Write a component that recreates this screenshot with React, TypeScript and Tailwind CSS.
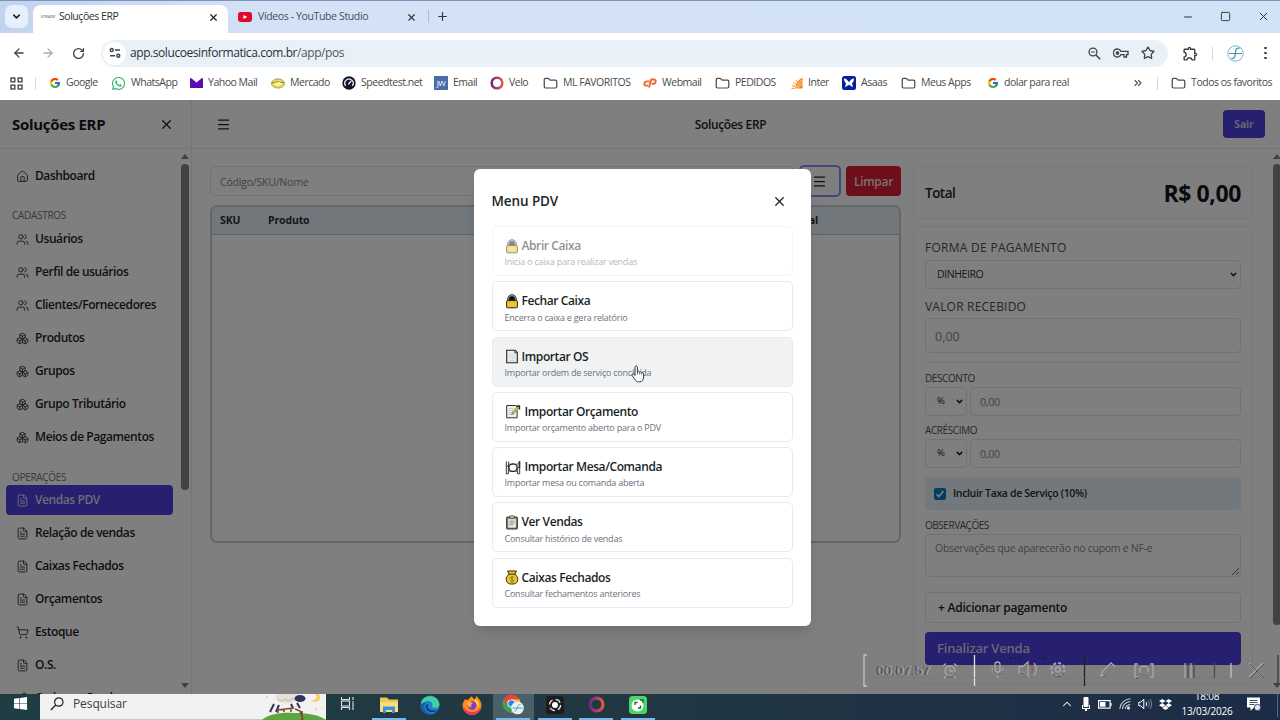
import React from "react";
import {
  ArrowLeft,
  ArrowRight,
  Boxes,
  ChevronDown,
  ChevronsRight,
  ChevronUp,
  FileText,
  Folder,
  House,
  Menu,
  Minus,
  Plus,
  RotateCw,
  ShoppingCart,
  Square,
  Star,
  Users,
  Wrench,
  X,
} from "lucide-react";
import { FcGoogle } from "react-icons/fc";
import { FaDropbox, FaWhatsapp, FaWindows } from "react-icons/fa";
import { MdOutlineExtension } from "react-icons/md";

interface NavItem {
  label: string;
  icon: React.ElementType;
  active?: boolean;
}

interface MenuOption {
  title: string;
  description: string;
  icon: React.ReactNode;
  state?: "disabled" | "hover";
}

interface Bookmark {
  label: string;
  icon: React.ReactNode;
  className: string;
}

const cadastros: NavItem[] = [
  { label: "Usuários", icon: Users },
  { label: "Perfil de usuários", icon: Users },
  { label: "Clientes/Fornecedores", icon: Users },
  { label: "Produtos", icon: Boxes },
  { label: "Grupos", icon: Boxes },
  { label: "Grupo Tributário", icon: Boxes },
  { label: "Meios de Pagamentos", icon: Boxes },
];

const operacoes: NavItem[] = [
  { label: "Vendas PDV", icon: FileText, active: true },
  { label: "Relação de vendas", icon: FileText },
  { label: "Caixas Fechados", icon: FileText },
  { label: "Orçamentos", icon: FileText },
  { label: "Estoque", icon: ShoppingCart },
  { label: "O.S.", icon: FileText },
  { label: "Ordens e Prod.", icon: Wrench },
];

/* ---------- Icons ---------- */

const LockIcon = () => (
  <svg width="14" height="15" viewBox="0 0 14 15">
    <path d="M2.6 7V5a4.400 4.400 0 0 1 8.800 0v2" fill="#8a8a8a" stroke="#555" strokeWidth="1" />
    <path d="M4.200 7V5.200a2.800 2.800 0 0 1 5.600 0V7" fill="#111" stroke="#111" strokeWidth=".6" />
    <rect x="1.600" y="6.600" width="10.800" height="7.200" rx=".8" fill="#f2c230" stroke="#2a2410" strokeWidth="1" />
  </svg>
);

const PageIcon = () => (
  <svg width="14" height="15" viewBox="0 0 14 15">
    <path d="M1.700 1.200h8.400l2.200 2.200v10.400H1.700z" fill="#eceeef" stroke="#222" strokeWidth="1.100" />
    <path d="M9.800 1.400v2.300h2.300" fill="none" stroke="#222" strokeWidth=".8" />
    <path d="M3.500 5.500h7M3.500 7.500h7M3.500 9.500h7M3.500 11.500h7" stroke="#cfd2d4" strokeWidth=".7" />
  </svg>
);

const MemoIcon = () => (
  <svg width="17" height="15" viewBox="0 0 17 15">
    <path d="M1.700 1.500h8.800l1.600 1.600v10.700H1.700z" fill="#f1f1ee" stroke="#333" strokeWidth="1" />
    <path d="M3.500 4.500h6M3.500 6.500h5M3.500 8.500h4M3.500 10.500h6" stroke="#b9bbb8" strokeWidth=".7" />
    <path d="m6.500 10.500 1-2.600 5-5.200 1.600 1.500-5 5.200z" fill="#b5cb4a" stroke="#596329" strokeWidth=".5" />
    <path d="M11.500 2h3v3.400" fill="none" stroke="#222" strokeWidth="1.300" />
  </svg>
);

const PlateIcon = () => (
  <svg width="17" height="15" viewBox="0 0 17 15" fill="none" stroke="#222">
    <circle cx="8" cy="7.700" r="4" strokeWidth="1" />
    <path d="M4 4.200h8M4 11.200h8" strokeWidth=".8" />
    <path d="M1.300 1.500v4.600h2.300V1.500M1.300 6v7.800h2.100V6" strokeWidth=".9" />
    <path d="M14.700 1.300c-1.800.8-2 4-1.600 6.200h1.600V1.300v12.500h-2.100V7.500" strokeWidth=".9" />
  </svg>
);

const ClipboardIcon = () => (
  <svg width="14" height="15" viewBox="0 0 14 15">
    <rect x="1.600" y="2" width="10.800" height="12" rx=".8" fill="#8c7c62" stroke="#222" strokeWidth=".9" />
    <rect x="3.200" y="3.600" width="7.600" height="9" fill="#e9e9e6" />
    <rect x="4.600" y=".9" width="4.800" height="2.800" rx=".6" fill="#bbb" stroke="#333" strokeWidth=".7" />
    <path d="M4.500 6.200h5M4.500 8h5M4.500 9.800h3.500" stroke="#777" strokeWidth=".8" />
  </svg>
);

const MoneyBagIcon = () => (
  <svg width="14" height="15" viewBox="0 0 14 15">
    <path d="M2.600 1h8.800L9.800 4.200C11.800 5.400 12.800 7.600 12.800 9.600c0 2.800-2.200 4.500-5.800 4.500s-5.800-1.700-5.800-4.500c0-2 1-4.200 3-5.400z" fill="#f0c22a" stroke="#3a2f0c" strokeWidth="1" />
    <path d="M3.800 4.200h6.400" stroke="#6b4c12" strokeWidth="1.300" />
    <path d="M8.600 7.400C7 6.600 5.600 7 5.600 8.200s3 1 3 2.400-1.800 1.600-3.200.7M7 6.300v6" fill="none" stroke="#4c8a35" strokeWidth=".9" />
  </svg>
);

const HandCursor = () => (
  <svg width="14" height="18" viewBox="0 0 14 18">
    <path
      d="M4 10.500V2.300C4 .5 6.400.5 6.400 2.300v4.600c.4-.9 2-.8 2.200.3.500-.7 1.900-.5 2 .6.700-.5 2-.1 2 1.200v3.200c0 2.600-1.300 4.600-4 4.600H7.400c-1.500 0-2.500-.7-3.300-2L1.200 10.500c-.7-1.300.8-2.200 1.700-1.100z"
      fill="#fff"
      stroke="#333"
      strokeWidth="1"
    />
    <path d="M6.400 7v2.500M8.600 7.500v2M10.600 8v1.500" stroke="#333" strokeWidth=".7" />
  </svg>
);

const YoutubeIcon = () => (
  <svg width="14" height="10" viewBox="0 0 14 10">
    <rect width="14" height="10" rx="2.400" fill="#e3062f" />
    <path d="m5.500 2.900 3.800 2.100-3.800 2.100z" fill="#fff" />
  </svg>
);

const TuneIcon = () => (
  <svg width="12" height="12" viewBox="0 0 12 12" fill="none" stroke="#3f4347" strokeWidth="1.400">
    <circle cx="2.700" cy="3" r="1.500" />
    <path d="M6 3h5M1 8.800h5" />
    <circle cx="9.300" cy="8.800" r="1.500" />
  </svg>
);

const AppsGridIcon = () => (
  <svg width="13" height="13" viewBox="0 0 13 13" fill="none" stroke="#45494d" strokeWidth="1.400">
    <rect x="1" y="1" width="3.800" height="3.800" />
    <rect x="8.200" y="1" width="3.800" height="3.800" />
    <rect x="1" y="8.200" width="3.800" height="3.800" />
    <rect x="8.200" y="8.200" width="3.800" height="3.800" />
  </svg>
);

const YahooIcon = () => (
  <svg width="13" height="10" viewBox="0 0 13 10">
    <rect width="13" height="10" rx=".8" fill="#5b0cb5" />
    <path d="m1 0 5.500 4.600L12 0z" fill="#fff" />
  </svg>
);

const MercadoIcon = () => (
  <svg width="14" height="11" viewBox="0 0 14 11">
    <ellipse cx="7" cy="5.500" rx="6.500" ry="4.600" fill="#f1dc4c" stroke="#8d8748" strokeWidth=".8" />
    <path d="M1 4.500c2 .8 3 .2 4.500-.6 1.800-.8 4.500 1.200 7.400.6" fill="none" stroke="#77754c" strokeWidth=".9" />
    <path d="M3 5.500c1.500 2.800 6.500 2.800 8 0L8 4z" fill="#f6f3d9" />
  </svg>
);

const SpeedtestIcon = () => (
  <svg width="14" height="14" viewBox="0 0 14 14">
    <circle cx="7" cy="7" r="6.700" fill="#15152a" />
    <path d="M3.700 9.800a4.200 4.200 0 1 1 6.600 0" fill="none" stroke="#fff" strokeWidth="1.200" />
    <path d="m6.400 8.400 2.800-3.600" stroke="#fff" strokeWidth="1.300" />
  </svg>
);

const VeloIcon: React.FC<{ size?: number }> = ({ size = 14 }) => (
  <svg width={size} height={size} viewBox="0 0 14 14">
    <defs>
      <linearGradient id="velo">
        <stop offset="0" stopColor="#6d2a7c" />
        <stop offset="1" stopColor="#e2574c" />
      </linearGradient>
    </defs>
    <circle cx="7" cy="7" r="5.300" fill="none" stroke="url(#velo)" strokeWidth="2.600" />
  </svg>
);

const CpanelIcon = () => (
  <svg width="14" height="10" viewBox="0 0 14 10" fill="none" stroke="#e8672c" strokeWidth="1.900">
    <path d="M6.600 3.400H3.800C1.200 3.400.4 7.600 3 7.600h2.200" />
    <path d="M6 9.600 8.200 1.500H11c2.800 0 2 4.300-.6 4.300H8.600" />
  </svg>
);

const InterIcon = () => (
  <svg width="12" height="12" viewBox="0 0 12 12">
    <path d="M11.500.5v11H4.200c.3-4.600 3-8.800 7.300-11z" fill="#f08a1c" />
    <path d="M.5 11.300h3M1.200 8.400l3 1.200M2.600 5.600l2.700 1.900M5 3.200l1.800 2.400" stroke="#f3a650" strokeWidth="1.200" />
    <path d="m4.500 11.500 6-8.500M6.500 11.500l5-6" stroke="#fff" strokeWidth=".6" />
  </svg>
);

const AsaasIcon = () => (
  <svg width="14" height="14" viewBox="0 0 14 14">
    <rect width="14" height="14" rx="2.500" fill="#0b1f9c" />
    <path d="M2 2.500c2 .2 3.600 1.500 5 3.800 1.400-2.300 3-3.600 5-3.800-.2 2.500-.8 4-2 4.800L11 11.300 7 8.800l-4 2.500 1-4C2.800 6.500 2.200 5 2 2.500z" fill="#fff" />
  </svg>
);

const FolderIcon = () => <Folder size={15} strokeWidth={2} color="#474b4f" className="scale-y-90" />;

const ZoomOutIcon = () => (
  <svg width="13" height="13" viewBox="0 0 13 13" fill="none" stroke="#3f4347">
    <circle cx="5" cy="5" r="3.900" strokeWidth="1.300" />
    <path d="m8 8 4.200 4.200" strokeWidth="1.500" />
    <path d="M3.200 5h3.600" strokeWidth="1" />
  </svg>
);

const KeyIcon = () => (
  <svg width="16" height="10" viewBox="0 0 16 10" fill="none" stroke="#3f4347" strokeWidth="1.300">
    <path d="M8 3.400A4 4 0 1 0 8 6.600h3V9h2.500V6.600H15V3.400z" />
    <circle cx="4.500" cy="5" r="1.200" fill="#3f4347" />
  </svg>
);

const ProfileIcon = () => (
  <svg width="17" height="17" viewBox="0 0 17 17" fill="none">
    <circle cx="8.500" cy="8.500" r="7.700" stroke="#63bccd" strokeWidth="1" />
    <path d="M12.600 3.300c-3-.6-4 1-4.200 4.700s-1.200 6-4 5.600" stroke="#3a9db5" strokeWidth="1.300" />
    <path d="M2 8.500h13" stroke="#66757d" strokeWidth=".9" />
  </svg>
);

/* ---------- Browser ---------- */

const TabStrip = () => (
  <div className="flex h-[33px] shrink-0 items-end border-t border-[#7f93b8] bg-linear-to-r from-[#c3d2ef] via-[#d3e2f6] via-20% to-[#d3e3f7]">
    <div className="mb-[5px] ml-[5px] flex h-[23px] w-[23px] items-center justify-center rounded-[7px] bg-[#e6f0fa]">
      <ChevronDown size={11} strokeWidth={3.600} color="#222" />
    </div>
    <div className="ml-[5px] flex h-[28px] w-[195px] items-center rounded-t-[8px] bg-white pb-[4px] pl-[8px]">
      <span className="w-[12px] text-center text-[4px] font-bold italic leading-none text-[#8f949c]">ETRADE</span>
      <span className="ml-[6px] text-[10.500px] tracking-[-0.450px] text-[#2c2f33]">Soluções ERP</span>
      <X size={11} strokeWidth={2.800} color="#222" className="ml-auto mr-[9px]" />
    </div>
    <div className="flex h-[28px] w-[200px] items-center pb-[4px] pl-[10px]">
      <YoutubeIcon />
      <span className="ml-[6px] text-[10.500px] tracking-[-0.370px] text-[#46505c]">Vídeos - YouTube Studio</span>
      <X size={11} strokeWidth={2.400} color="#333" className="ml-auto mr-[11px]" />
    </div>
    <div className="mb-[10px] h-[13px] w-px bg-[#a9bce0]" />
    <Plus size={13} strokeWidth={2.200} color="#333" className="mb-[10px] ml-[7px]" />
    <div className="mb-[10px] ml-auto flex items-center gap-[26px] pr-[10px] text-[#2b2f38]">
      <Minus size={12} strokeWidth={2} />
      <Square size={11} strokeWidth={2} />
      <X size={13} strokeWidth={1.800} />
    </div>
  </div>
);

const AddressBar = () => (
  <div className="flex h-[36px] shrink-0 items-center bg-white pt-[4px]">
    <ArrowLeft size={14} strokeWidth={2.200} color="#3f4347" className="ml-[12px]" />
    <ArrowRight size={14} strokeWidth={2.200} color="#a9acb0" className="ml-[15px]" />
    <RotateCw size={13} strokeWidth={2.400} color="#3f4347" className="ml-[17px]" />
    <div className="ml-[16px] flex h-[27px] w-[1067px] items-center rounded-full bg-[#e9f1f8] pl-[2px] pr-[13px]">
      <div className="flex h-[23px] w-[23px] items-center justify-center rounded-full bg-white">
        <TuneIcon />
      </div>
      <span className="ml-[4px] text-[12px] tracking-[-0.430px] text-[#2b2f33]">
        app.solucoesinformatica.com.br<span className="text-[#50575e]">/app/pos</span>
      </span>
      <div className="ml-auto flex items-center gap-[12px]">
        <ZoomOutIcon />
        <KeyIcon />
        <Star size={14} strokeWidth={2.200} color="#3f4347" />
      </div>
    </div>
    <MdOutlineExtension size={17} color="#3f4347" className="ml-[14px]" />
    <div className="ml-[13px] h-[13px] w-px bg-[#c8dcf0]" />
    <div className="ml-[14px]">
      <ProfileIcon />
    </div>
    <div className="ml-[20px] flex flex-col gap-[2.500px]">
      <i className="h-[2.500px] w-[2.500px] rounded-full bg-[#3f4347]" />
      <i className="h-[2.500px] w-[2.500px] rounded-full bg-[#3f4347]" />
      <i className="h-[2.500px] w-[2.500px] rounded-full bg-[#3f4347]" />
    </div>
  </div>
);

const bookmarks: Bookmark[] = [
  { label: "Google", icon: <FcGoogle size={12} />, className: "w-[62px]" },
  { label: "WhatsApp", icon: <FaWhatsapp size={15} color="#35b46a" />, className: "w-[79px]" },
  { label: "Yahoo Mail", icon: <YahooIcon />, className: "w-[81px]" },
  { label: "Mercado", icon: <MercadoIcon />, className: "w-[71px]" },
  { label: "Speedtest.net", icon: <SpeedtestIcon />, className: "w-[92px]" },
  {
    label: "Email",
    icon: <span className="flex h-[14px] w-[14px] items-center justify-center bg-[#4a6da7] text-[8px] text-white">JW</span>,
    className: "w-[56px]",
  },
  { label: "Velo", icon: <VeloIcon />, className: "w-[53px]" },
  { label: "ML FAVORITOS", icon: <FolderIcon />, className: "w-[100px]" },
  { label: "Webmail", icon: <CpanelIcon />, className: "w-[72px]" },
  { label: "PEDIDOS", icon: <FolderIcon />, className: "w-[76px]" },
  { label: "Inter", icon: <InterIcon />, className: "w-[51px]" },
  { label: "Asaas", icon: <AsaasIcon />, className: "w-[59px]" },
  { label: "Meus Apps", icon: <FolderIcon />, className: "w-[86px]" },
  { label: "dolar para real", icon: <FcGoogle size={12} />, className: "w-[90px]" },
];

const BookmarksBar = () => (
  <div className="flex h-[31px] shrink-0 items-center bg-white pb-[3px] text-[10.500px] tracking-[-0.480px] text-[#474b50]">
    <div className="ml-[10px]">
      <AppsGridIcon />
    </div>
    <div className="mr-[13px] ml-[12px] h-[13px] w-px bg-[#cddcec]" />
    {bookmarks.map((item) => (
      <div key={item.label} className={`flex shrink-0 items-center gap-[5px] whitespace-nowrap ${item.className}`}>
        {item.icon}
        {item.label}
      </div>
    ))}
    <ChevronsRight size={12} strokeWidth={2.200} className="ml-auto" />
    <div className="mr-[13px] ml-[13px] h-[13px] w-px bg-[#c3daf0]" />
    <div className="mr-[8px] flex items-center gap-[5px]">
      <FolderIcon />
      Todos os favoritos
    </div>
  </div>
);

/* ---------- Sidebar ---------- */

const NavLink: React.FC<{ item: NavItem }> = ({ item }) => {
  const Icon = item.icon;
  return (
    <div
      className={`mb-[3px] flex h-[30px] w-[167px] shrink-0 items-center gap-[6px] rounded-[4px] pl-[10px] text-[12px] font-semibold tracking-[-0.420px] ${
        item.active ? "bg-[#4f3fe0] text-[#d9d9e8]" : "text-[#1c1f26]"
      }`}
    >
      <Icon size={13} strokeWidth={1.800} className={`shrink-0 ${item.active ? "" : "text-[#3a3f47]"}`} />
      <span className="whitespace-nowrap">{item.label}</span>
    </div>
  );
};

const ScrollBar: React.FC<{ thumb: string }> = ({ thumb }) => (
  <div className="flex w-[9px] shrink-0 flex-col items-center pt-[5px] pb-[6px]">
    <div className="h-0 w-0 border-x-4 border-b-[5px] border-x-transparent border-b-[#858585]" />
    <div className={`mt-[5px] w-[8px] rounded-full bg-[#858585] ${thumb}`} />
    <div className="mt-auto h-0 w-0 border-x-4 border-t-[5px] border-x-transparent border-t-[#858585]" />
  </div>
);

const Sidebar = () => (
  <aside className="flex w-[192px] shrink-0 flex-col overflow-hidden border-r border-[#e9ebed]">
    <div className="flex h-[49px] shrink-0 items-center justify-between border-b border-[#e9ebed] pr-[17px] pl-[12px]">
      <h1 className="text-[15px] font-bold tracking-[-0.300px] text-[#15171c]">Soluções ERP</h1>
      <X size={15} strokeWidth={2} color="#1c1f26" />
    </div>
    <div className="flex min-h-0 flex-1">
      <nav className="flex min-h-0 flex-1 flex-col overflow-hidden pt-[12px] pl-[6px]">
        <NavLink item={{ label: "Dashboard", icon: House }} />
        <p className="mt-[14px] flex h-[14px] shrink-0 items-center pl-[6px] text-[10px] tracking-[-0.300px] text-[#6b7280]">CADASTROS</p>
        <div className="mt-[2px]">
          {cadastros.map((item) => (
            <NavLink key={item.label} item={item} />
          ))}
        </div>
        <p className="mt-[15px] flex h-[14px] shrink-0 items-center pl-[6px] text-[10px] tracking-[-0.300px] text-[#6b7280]">OPERAÇÕES</p>
        <div className="mt-[1px]">
          {operacoes.map((item) => (
            <NavLink key={item.label} item={item} />
          ))}
        </div>
      </nav>
      <div className="mr-[2px] flex">
        <ScrollBar thumb="h-[326px]" />
      </div>
    </div>
  </aside>
);

/* ---------- PDV ---------- */

const SaleArea = () => (
  <section className="w-[691px] shrink-0">
    <div className="flex h-[30px] items-center gap-[5px]">
      <input
        placeholder="Código/SKU/Nome"
        className="h-[30px] w-[584px] rounded-[4px] border border-[#e2e4e7] px-[9px] pt-px text-[10.500px] tracking-[-0.200px] placeholder:text-[#80858c]"
      />
      <button className="flex h-[32px] w-[42px] items-center justify-center rounded-[5px] border-2 border-[#8f8df0] pr-[2px]">
        <Menu size={15} strokeWidth={2} color="#1c1f26" />
      </button>
      <button className="h-[30px] w-[55px] rounded-[4px] bg-[#d81f36] pt-px text-[12px] font-semibold tracking-[-0.300px] text-[#f3dede]">
        Limpar
      </button>
    </div>
    <div className="mt-[9px] h-[338px] overflow-hidden rounded-[7px] border-2 border-[#c8ced4]">
      <div className="flex h-[28px] items-center border-b border-[#bcc6cf] bg-[#e3eef4] pt-px pl-[8px] text-[10.500px] font-bold tracking-[-0.150px] text-[#2a2f37]">
        <span className="w-[48px]">SKU</span>
        <span>Produto</span>
        <span className="mr-[81px] ml-auto">Total</span>
      </div>
    </div>
  </section>
);

const PercentRow = () => (
  <div className="flex gap-[3px]">
    <div className="flex h-[29px] w-[42px] items-center justify-between rounded-[4px] border border-[#e2e4e7] pr-[2px] pl-[11px] text-[9.500px] text-[#22252b]">
      %
      <ChevronDown size={9} strokeWidth={4} />
    </div>
    <input
      placeholder="0,00"
      className="h-[29px] w-[271px] rounded-[4px] border border-[#e2e4e7] px-[9px] text-[10.500px] tracking-[-0.200px] placeholder:text-[#80858c]"
    />
  </div>
);

const PaymentArea = () => (
  <section className="w-[340px] shrink-0">
    <div className="flex h-[53px] items-center justify-between rounded-[7px] border border-[#eeeff1] pr-[11px] pl-[11px] pt-[2px]">
      <span className="text-[13.500px] font-semibold tracking-[-0.500px] text-[#20242b]">Total</span>
      <span className="text-[23px] font-bold tracking-[-0.400px] text-[#12141c]">R$ 0,00</span>
    </div>
    <div className="mt-[7px] flex h-[459px] flex-col rounded-[7px] border border-[#eeeff1] pt-[13px] pr-[11px] pl-[11px]">
      <label className="flex h-[16px] items-center text-[12px] font-medium tracking-[0.280px] text-[#4b5158]">FORMA DE PAGAMENTO</label>
      <div className="mt-[4px] flex h-[29px] items-center justify-between rounded-[4px] border border-[#e2e4e7] pr-[2px] pl-[11px] text-[10.500px] tracking-[-0.420px] text-[#2b2f36]">
        DINHEIRO
        <ChevronDown size={9} strokeWidth={4} />
      </div>
      <label className="mt-[10px] flex h-[16px] items-center text-[12px] font-medium tracking-[0.200px] text-[#4b5158]">VALOR RECEBIDO</label>
      <input
        placeholder="0,00"
        className="mt-[3px] h-[35px] shrink-0 rounded-[4px] border border-[#e2e4e7] px-[9px] pt-[2px] text-[12.500px] placeholder:text-[#80858c]"
      />
      <div className="mt-[9px] mb-[8px] h-px shrink-0 bg-[#e9ebed]" />
      <label className="flex h-[14px] items-center text-[10px] font-medium tracking-[-0.400px] text-[#4b5158]">DESCONTO</label>
      <div className="mt-[2px]">
        <PercentRow />
      </div>
      <label className="mt-[8px] flex h-[13px] items-center text-[10px] font-medium tracking-[-0.400px] text-[#4b5158]">ACRÉSCIMO</label>
      <div className="mt-[2px]">
        <PercentRow />
      </div>
      <div className="mt-[9px] flex h-[33px] shrink-0 items-center rounded-[4px] bg-[#e6f1f8] pl-[9px] text-[10.500px] font-semibold tracking-[-0.350px] text-[#252a32]">
        <span className="mr-[7px] flex h-[12px] w-[12px] items-center justify-center rounded-[2px] bg-[#0b78c4]">
          <svg width="10" height="10" viewBox="0 0 10 10">
            <path d="m1.500 5.200 2.300 2.300 4.700-5.500" fill="none" stroke="#fff" strokeWidth="1.600" />
          </svg>
        </span>
        Incluir Taxa de Serviço (10%)
      </div>
      <label className="mt-[8px] flex h-[14px] items-center text-[10px] font-medium tracking-[-0.450px] text-[#4b5158]">OBSERVAÇÕES</label>
      <textarea
        placeholder="Observações que aparecerão no cupom e NF-e"
        className="mt-[2px] h-[43px] shrink-0 rounded-[4px] border border-[#e2e4e7] px-[9px] py-[6px] text-[10.500px] tracking-[-0.280px] placeholder:text-[#80858c]"
      />
      <div className="mt-[15px] flex h-[31px] shrink-0 items-center rounded-[4px] border border-[#e2e4e7] pl-[12px] text-[12px] font-semibold tracking-[-0.250px] text-[#20242b]">
        + Adicionar pagamento
      </div>
      <div className="mt-[9px] flex h-[33px] shrink-0 items-center rounded-[4px] bg-[#4f3fe0] pt-px pl-[12px] text-[13px] font-semibold tracking-[-0.200px] text-[#d0cfe8]">
        Finalizar Venda
      </div>
    </div>
  </section>
);

const options: MenuOption[] = [
  { title: "Abrir Caixa", description: "Inicia o caixa para realizar vendas", icon: <LockIcon />, state: "disabled" },
  { title: "Fechar Caixa", description: "Encerra o caixa e gera relatório", icon: <LockIcon /> },
  { title: "Importar OS", description: "Importar ordem de serviço concluída", icon: <PageIcon />, state: "hover" },
  { title: "Importar Orçamento", description: "Importar orçamento aberto para o PDV", icon: <MemoIcon /> },
  { title: "Importar Mesa/Comanda", description: "Importar mesa ou comanda aberta", icon: <PlateIcon /> },
  { title: "Ver Vendas", description: "Consultar histórico de vendas", icon: <ClipboardIcon /> },
  { title: "Caixas Fechados", description: "Consultar fechamentos anteriores", icon: <MoneyBagIcon /> },
];

const MenuModal = () => (
  <div className="relative h-[457px] w-[337px] rounded-[6px] bg-white px-[18px] pt-[20px] shadow-lg">
    <div className="flex h-[25px] items-center justify-between pr-[6px]">
      <h2 className="text-[13.500px] font-semibold tracking-[-0.100px] text-[#1c1f26]">Menu PDV</h2>
      <X size={15} strokeWidth={2} color="#1c1f26" />
    </div>
    <div className="mt-[12px] flex flex-col gap-[5.300px]">
      {options.map((option) => (
        <div
          key={option.title}
          className={`flex h-[50px] flex-col justify-center rounded-[5px] border border-[#e9eaed] pt-[5px] pl-[12px] ${
            option.state === "disabled" ? "opacity-50" : ""
          } ${option.state === "hover" ? "bg-[#f0f2f4]" : ""}`}
        >
          <div className="flex h-[17px] items-center gap-[3px] text-[12px] font-semibold tracking-[-0.400px] text-[#1c1f26]">
            {option.icon}
            {option.title}
          </div>
          <div className="flex h-[15px] items-center text-[9px] tracking-[-0.230px] text-[#6b7280]">{option.description}</div>
        </div>
      ))}
    </div>
    <div className="absolute top-[196px] left-[157px]">
      <HandCursor />
    </div>
  </div>
);

/* Screen recorder controls floating over the page */
const RecorderBar = () => (
  <div className="absolute right-0 bottom-[6px] flex h-[34px] w-[417px] items-center">
    <svg width="417" height="34" viewBox="0 0 417 34" fill="none" strokeWidth="1.300">
      <path d="M4 1H1v31h3" stroke="#c4c4c4" />
      <path d="M111.500 1v31" stroke="#e2e2e2" />
      <path d="M221.500 1v31" stroke="#222" />
      <path d="M415 1v28" stroke="#3a3a3a" />
      <path d="M5 23.500h409" stroke="#777" strokeWidth=".6" />
      <g stroke="#a8a8a8">
        <circle cx="87" cy="17" r="5" />
        <path d="M87 14v3h3M80 12l3-2.500M94 12l-3-2.500M83 22l-2 2M91 22l2 2" />
        <rect x="132" y="8" width="5" height="10" rx="2.500" />
        <path d="M129 14c0 8 11 8 11 0M134.500 20v4" />
        <path d="M156 12.500h4l5-4.500v15l-5-4.500h-4z" />
        <path d="M168 11c2 2.500 2 6 0 8.500" stroke="#9b5a5e" />
        <path d="M171 9c3 4 3 8.500 0 12.500" />
        <circle cx="195" cy="15.500" r="6.500" strokeDasharray="3 2" strokeWidth="2" />
        <circle cx="195" cy="15.500" r="2.500" />
        <path d="m238 22 1-4 9-9 3.500 3-9.500 9z" />
        <path d="M275 10h-3v13h3M287 10h3v13h-3" />
        <circle cx="281" cy="16.500" r="4.200" />
        <path d="M322 9v15M328 9v15" />
        <path d="M368 9v15" stroke="#c2c2c2" />
        <path d="m386 9 14 14M400 9l-14 14" />
      </g>
      <g stroke="#4d4d4d">
        <path d="M325 9v15M331 9v15M351.500 9v15" />
        <path d="m387 10 14 14M401 10l-14 14" strokeWidth=".9" />
        <path d="m240 23 10.500-10" strokeWidth=".9" />
        <path d="M83.500 21.500a5 5 0 0 0 8.500-3M130 16c1 5 7 6 10 1M157 19h3l5 4.500M190 20c3 4 9 3 11-1" strokeWidth=".9" />
        <path d="M277.500 19c2 3 6 2.500 7.500-.5M273 24h2.500" strokeWidth=".9" />
      </g>
      <path d="M147 4h1.500M151 4h1.500M155 4h1.500M176 4h1.500M180 4h1.500" stroke="#15122f" />
    </svg>
    <span className="absolute top-[7px] left-[14px] font-['Liberation_Sans'] text-[13px] tracking-[0.400px] text-[#888] [text-shadow:-1px_0_0_#333,1px_0_0_#aaa]">
      00:07:57
    </span>
  </div>
);

/* ---------- Taskbar ---------- */

const SheepDoodle = () => (
  <svg width="64" height="26" viewBox="0 0 64 26">
    <path d="M0 26c6-6 20-8 33-7 14 0 24 2 31 7z" fill="#5da53f" />
    <path d="M12 10 8 18M17 11l-3 7M35 9l3 5M29 10l2 4" stroke="#34305e" strokeWidth="2" />
    <ellipse cx="25" cy="3" rx="11" ry="6.500" fill="#e6dfd6" />
    <path d="M15 5c3 3 6 2 8 0 3 3 6 2 8-1" stroke="#bfb3a6" fill="none" />
    <ellipse cx="38" cy="4.500" rx="5.500" ry="3.500" fill="#35305f" />
    <path d="M53 0c3 2 2 6-4 6.500 4 3 10 1 9-4-.3-1.500-1-2.500-1-2.500z" fill="#f2cf72" />
    <path d="M16 19v-4M22 18v-3M29 18v-4M15 16l17-2M33 15l5 2 3 9M40 17v9" stroke="#7b4d26" strokeWidth="1.600" fill="none" />
    <circle cx="5" cy="3" r="1" fill="#f0cf7c" />
    <circle cx="54" cy="15" r="1" fill="#f0cf7c" />
    <circle cx="60" cy="14" r=".7" fill="#f0cf7c" />
  </svg>
);

const ExplorerIcon = () => (
  <svg width="20" height="18" viewBox="0 0 20 18">
    <path d="M1 1.500h7l2 2h9V16H1z" fill="#f0c64f" />
    <path d="M1 6h18v10H1z" fill="#f8dc82" />
    <path d="M4 17v-6.500h12V17h-3v-3H7v3z" fill="#3d93cf" />
  </svg>
);

const EdgeIcon = () => (
  <svg width="20" height="20" viewBox="0 0 20 20">
    <circle cx="10" cy="10" r="9.500" fill="#1c7fd0" />
    <path d="M1 8C3-1.500 18-1 19.500 9c0 4-5 5-7.500 3 2-4-2.500-7-6-5.500C3.500 7 1.500 8.500 1 11z" fill="#45cfa0" />
    <path d="M6 7.500c-4 5 0 12 8 11.500-5 2-13-1-13.500-8.500C1 8 3.500 7 6 7.500z" fill="#1560b3" />
    <path d="M8 9c-2 4 2 8 9.500 6-5 4.500-13 1-11.500-5z" fill="#17335a" />
  </svg>
);

const FirefoxIcon = () => (
  <svg width="20" height="20" viewBox="0 0 20 20">
    <path d="M3 4c1 1 2 1 3 1 1-2 3-3 4-4 0 2 2 3 3 3 1-1 1-2 1-3 3 2 5.500 6 5.500 9.500a9.500 9.500 0 0 1-19 0C.5 8 2 6 3 4z" fill="#ff8a26" />
    <path d="M1 11a9 9 0 0 0 18 0c-2 5-6 6-9 6s-7-2-9-6z" fill="#f0325c" />
    <path d="M13 4c4 2 5 6 3 9 0-3-1-5-3-6z" fill="#ffd93a" />
    <circle cx="10" cy="10.500" r="4.200" fill="#7a3ad0" />
    <path d="M5 7c3-1 5 0 6 2-2 0-3 2-1 3-3 1-5-2-5-5z" fill="#ffac35" />
  </svg>
);

const ChromeIcon = () => (
  <svg width="22" height="21" viewBox="0 0 22 21">
    <circle cx="9.500" cy="9.500" r="9" fill="#e8453c" />
    <path d="M1.700 5A9 9 0 0 0 9 18.500l4-7H5.500z" fill="#36a553" />
    <path d="M9.500 5.500h8A9 9 0 0 1 9 18.500l4-7z" fill="#f9c32e" />
    <circle cx="9.500" cy="9.500" r="4.100" fill="#fff" />
    <circle cx="9.500" cy="9.500" r="3.200" fill="#3c7de0" />
    <circle cx="15.500" cy="14" r="6.300" fill="#e4f3f8" />
    <path d="M18.500 10.500c-4-.5-2.500 7-6 6.500M10.500 14h10" fill="none" stroke="#4aa2ba" strokeWidth="1" />
  </svg>
);

const RecorderIcon = () => (
  <svg width="18" height="18" viewBox="0 0 18 18">
    <rect width="18" height="18" rx="3" fill="#1c1c1e" />
    <circle cx="9" cy="9" r="3" fill="#fff" />
    <circle cx="9" cy="9" r="5.600" fill="none" stroke="#e8e8e8" strokeWidth="1.300" strokeDasharray="5.500 3.300" />
    <circle cx="13" cy="4.500" r="1" fill="#46c97c" />
    <circle cx="4.500" cy="13" r="1" fill="#e95050" />
  </svg>
);

const GreenAppIcon = () => (
  <svg width="18" height="18" viewBox="0 0 18 18">
    <rect width="18" height="18" rx="3.500" fill="#49d765" />
    <circle cx="8.500" cy="9.500" r="6" fill="#fff" />
    <path d="M6 9V6.500h2.500M11.500 9.500V12H9M11 4h3v3" fill="none" stroke="#24613a" strokeWidth="1.300" />
  </svg>
);

const taskbarApps = [
  { id: "explorer", icon: <ExplorerIcon />, running: true },
  { id: "edge", icon: <EdgeIcon />, running: false },
  { id: "firefox", icon: <FirefoxIcon />, running: false },
  { id: "chrome", icon: <ChromeIcon />, running: true, active: true },
  { id: "recorder", icon: <RecorderIcon />, running: true },
  { id: "velo", icon: <VeloIcon size={17} />, running: true },
  { id: "green", icon: <GreenAppIcon />, running: true },
];

const Taskbar = () => (
  <footer className="flex h-[26px] shrink-0 items-center overflow-hidden bg-linear-to-r from-[#1f3d42] via-[#213742] to-[#1c2b47] text-white">
    <div className="flex w-[40px] justify-center pb-[7px]">
      <FaWindows size={15} />
    </div>
    <div className="flex h-[26px] w-[286px] items-center border-b border-[#c9c9c9] bg-[#f2f2f2] pl-[10px]">
      <svg width="14" height="14" viewBox="0 0 14 14" fill="none" stroke="#222" strokeWidth="1.200" className="mb-[6px]">
        <circle cx="8.800" cy="5" r="4.200" />
        <path d="M5.800 8 .8 13" />
      </svg>
      <span className="mb-[5px] ml-[9px] text-[12px] tracking-[-0.100px] text-[#3c3c3c]">Pesquisar</span>
      <div className="ml-auto">
        <SheepDoodle />
      </div>
    </div>
    <div className="flex w-[42px] justify-center pb-[8px]">
      <svg width="15" height="13" viewBox="0 0 15 13" fill="none" stroke="#dbe2e5" strokeWidth="1.100">
        <path d="M1.500 0v2.500h8V0M1.500 13v-2.500h8V13M13 0v3M13 6v7" />
        <rect x="1.500" y="4" width="8" height="5" />
        <path d="M12 5h2" />
      </svg>
    </div>
    {taskbarApps.map((app) => (
      <div
        key={app.id}
        className={`flex h-[26px] w-[41.500px] shrink-0 flex-col items-center justify-end ${app.active ? "bg-[#4a6068]" : ""}`}
      >
        <div className="flex h-[24px] items-center justify-center pb-[3px]">{app.icon}</div>
        <div className={`h-[2px] w-[34px] shrink-0 ${app.running ? "bg-[#76b9ed]" : ""}`} />
      </div>
    ))}
    <div className="mr-[2px] ml-auto flex h-[26px] items-center gap-[7px] pb-[6px]">
      <ChevronUp size={14} strokeWidth={1.800} />
      <svg width="10" height="14" viewBox="0 0 10 14" fill="#fff">
        <rect x="2.500" width="5" height="10" rx="1" />
        <path d="M1 8h1v3h6V8h1v4H6v2H4v-2H1z" />
      </svg>
      <svg width="14" height="9" viewBox="0 0 14 9">
        <rect x=".6" y=".6" width="11.500" height="7.500" fill="none" stroke="#fff" strokeWidth="1.200" />
        <rect x="2" y="2" width="5.500" height="4.700" fill="#fff" />
        <path d="M13 3v3" stroke="#fff" strokeWidth="1.200" />
      </svg>
      <svg width="12" height="12" viewBox="0 0 12 12" fill="none" stroke="#c6ccd6" strokeWidth="1.100">
        <path d="M.8 11C1 5.500 5.500 1 11.500.8M3.500 11c.3-4 3.500-7 8-7.500M6.300 11c.3-2.300 2.200-4.200 5-4.500" />
        <circle cx="9.500" cy="10" r="1.100" fill="#fff" />
      </svg>
      <svg width="14" height="12" viewBox="0 0 14 12" fill="none" stroke="#fff" strokeWidth="1">
        <path d="M.8 4.200h2l3-3v9.600l-3-3h-2z" />
        <path d="M8 4c.8 1.200.8 2.800 0 4" />
        <path d="M10 2.500c1.700 2.200 1.700 4.800 0 7M12 1c2 3 2 7 0 10" stroke="#8390a5" />
      </svg>
      <FaDropbox size={13} />
      <div className="ml-[2px] flex w-[52px] flex-col items-center text-[10px] leading-[15px] tracking-[-0.200px]">
        <span>18:08</span>
        <span>13/03/2026</span>
      </div>
      <svg width="16" height="15" viewBox="0 0 16 15" className="ml-[6px]">
        <path d="M1 .5h13v10H8l-3.500 3.300v-3.300H1z" fill="#fff" />
        <path d="M3.500 3.500h8M3.500 5.500h8M3.500 7.500h5" stroke="#2b3b52" strokeWidth=".9" />
        <circle cx="11.500" cy="10.500" r="3.200" fill="#dfe4ea" stroke="#1e2f4a" strokeWidth=".8" />
      </svg>
      <div className="ml-[8px] h-[26px] w-px bg-[#5c6a80]" />
    </div>
  </footer>
);

const App: React.FC = () => {
  return (
    <div className="flex h-[720px] w-[1280px] flex-col overflow-hidden font-['Open_Sans',sans-serif]">
      <TabStrip />
      <AddressBar />
      <BookmarksBar />
      <div className="relative flex h-[594px] shrink-0 overflow-hidden bg-white">
        <Sidebar />
        <div className="flex flex-1 flex-col">
          <header className="flex h-[49px] shrink-0 items-center justify-between border-b border-[#e9ebed] pr-[15px] pl-[24px]">
            <Menu size={15} strokeWidth={2} color="#1c1f26" />
            <span className="pt-px pl-[7px] text-[12px] font-semibold tracking-[-0.350px] text-[#1c1f26]">Soluções ERP</span>
            <button className="h-[28px] w-[42px] rounded-[4px] bg-[#4f3fe0] pt-px text-[10.500px] font-bold tracking-[-0.200px] text-[#c8c7e4]">
              Sair
            </button>
          </header>
          <div className="-mr-px flex min-h-0 flex-1">
            <main className="flex flex-1 gap-[12px] overflow-hidden pt-[17px] pl-[18px]">
              <SaleArea />
              <PaymentArea />
            </main>
            <ScrollBar thumb="h-[461px]" />
          </div>
        </div>
        {/* Modal backdrop */}
        <div className="absolute inset-0 flex items-center justify-center bg-black/50 pt-px pl-[4px]">
          <MenuModal />
        </div>
        <RecorderBar />
      </div>
      <Taskbar />
    </div>
  );
};

export default App;
